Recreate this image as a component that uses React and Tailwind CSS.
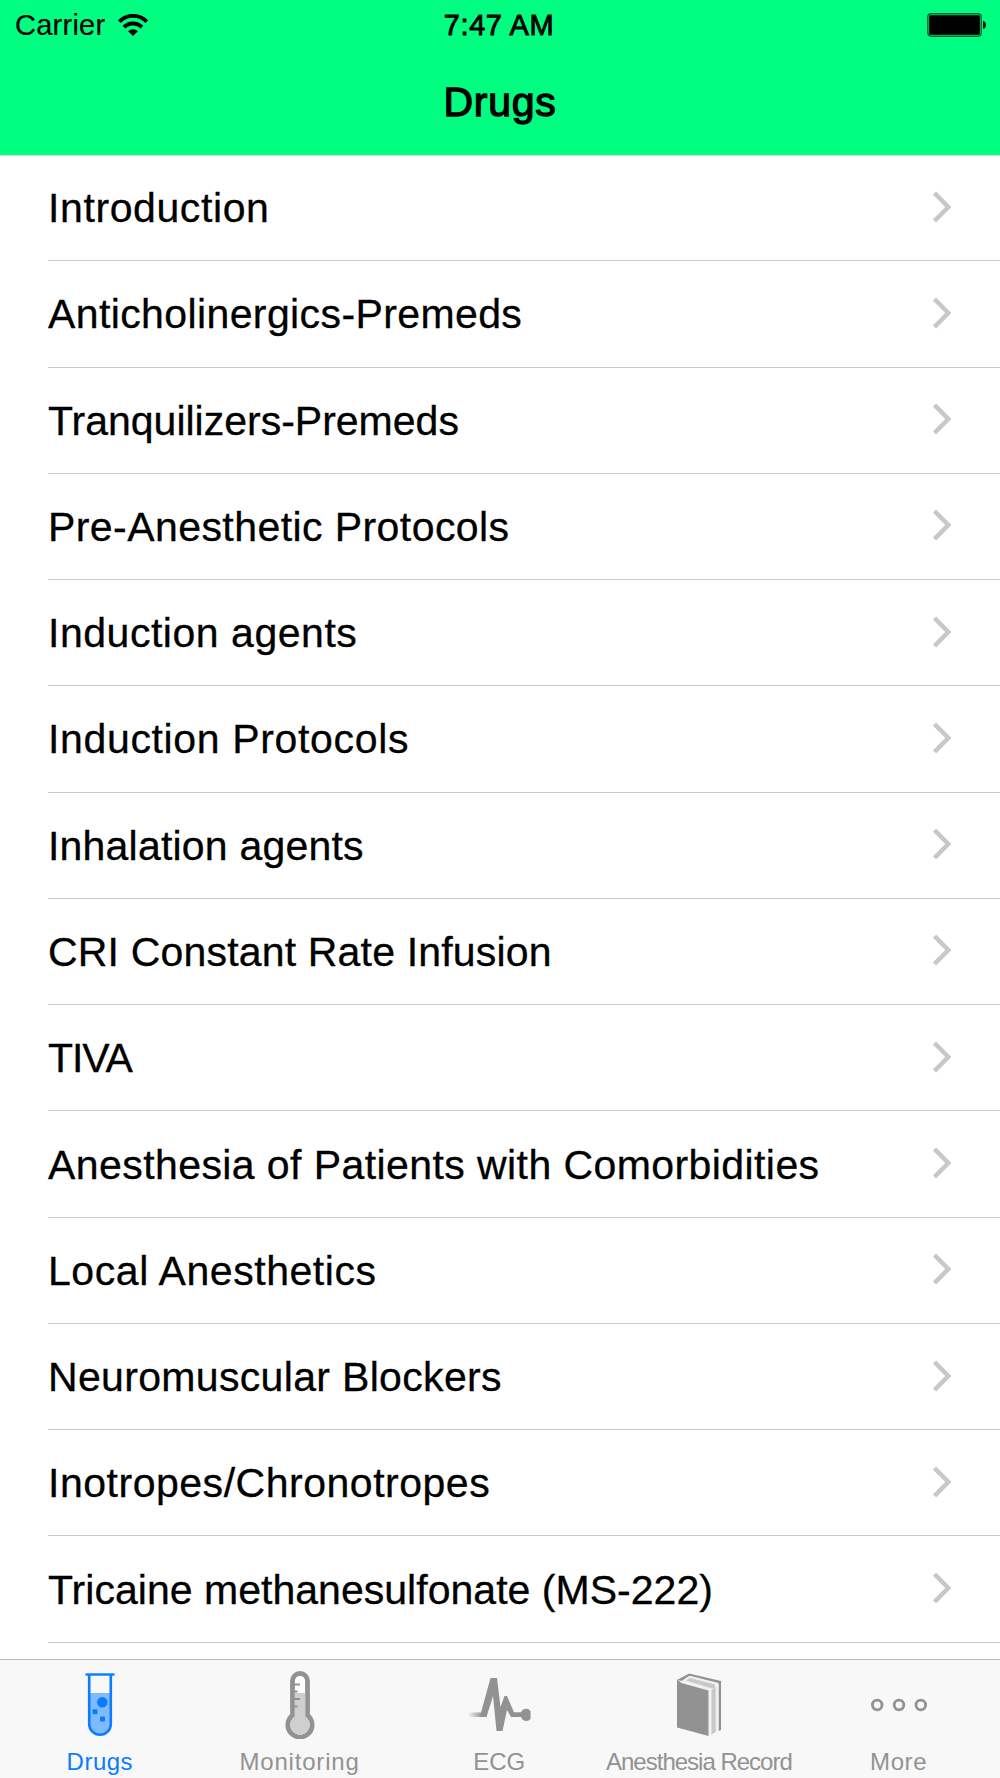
import React from 'react';
import { clsx } from 'clsx';

const topics = [
    { label: 'Introduction', tracking: 'tracking-[0.6px]' },
    { label: 'Anticholinergics-Premeds', tracking: 'tracking-[0.39px]' },
    { label: 'Tranquilizers-Premeds', tracking: 'tracking-[0px]' },
    { label: 'Pre-Anesthetic Protocols', tracking: 'tracking-[0.43px]' },
    { label: 'Induction agents', tracking: 'tracking-[0.53px]' },
    { label: 'Induction Protocols', tracking: 'tracking-[0.65px]' },
    { label: 'Inhalation agents', tracking: 'tracking-[0.2px]' },
    { label: 'CRI Constant Rate Infusion', tracking: 'tracking-[0.18px]' },
    { label: 'TIVA', tracking: 'tracking-[-1.1px]' },
    { label: 'Anesthesia of Patients with Comorbidities', tracking: 'tracking-[0.42px]' },
    { label: 'Local Anesthetics', tracking: 'tracking-[0.56px]' },
    { label: 'Neuromuscular Blockers', tracking: 'tracking-[0.33px]' },
    { label: 'Inotropes/Chronotropes', tracking: 'tracking-[0.52px]' },
    { label: 'Tricaine methanesulfonate (MS-222)', tracking: 'tracking-[0.03px]' },
];

function WifiIcon() {
    return (
        <svg className="-mt-px -ml-px" width="30" height="22" viewBox="0 0 30 22" fill="none" stroke="#000" strokeWidth="3.8">
            <path d="M1.3 7.7A18.8 18.8 0 0 1 28.7 7.7" />
            <path d="M6 13.2A12.8 12.8 0 0 1 24 13.2" />
            <path d="M10.1 17.3A7 7 0 0 1 19.9 17.3L15 22Z" fill="#000" stroke="none" />
        </svg>
    );
}

function BatteryIcon() {
    return (
        <svg width="60" height="24" viewBox="0 0 60 24">
            <rect x="0.7" y="0.7" width="53.6" height="22.6" rx="3.5" fill="#00c464" stroke="#00622f" strokeWidth="1.2" />
            <rect x="2.2" y="2.2" width="50.6" height="19.6" rx="1.5" fill="#000" />
            <path d="M56 8C60 8.6 60 15.4 56 16Z" fill="#000" />
        </svg>
    );
}

function Chevron() {
    return (
        <svg className="-mt-0.5" width="20" height="32" viewBox="0 0 20 32" fill="none" stroke="#c7c7cc" strokeWidth="4.5">
            <path d="M1.5 2L15.3 16L1.5 30" />
        </svg>
    );
}

function TubeIcon() {
    return (
        <svg width="30" height="64" viewBox="0 0 30 64">
            <path d="M4 20H26V51A11 11 0 0 1 4 51Z" fill="#7fbafc" />
            <path d="M4.2 2V51A10.8 10.8 0 0 0 25.8 51V2" fill="none" stroke="#0a7cff" strokeWidth="2.6" />
            <path d="M0.5 1.5H29.5" stroke="#0a7cff" strokeWidth="2.4" />
            <circle cx="17.3" cy="29.3" r="5.2" fill="#0a7cff" />
            <rect x="7.5" y="36.3" width="5" height="5" rx="1" fill="#0a7cff" />
            <rect x="15" y="43.5" width="5" height="5" rx="1" fill="#0a7cff" />
        </svg>
    );
}

function ThermometerIcon() {
    return (
        <svg width="30" height="68" viewBox="0 0 30 68">
            <path
                d="M7.5 10A7.5 7.6 0 0 1 22.5 10V44.5A12.1 12.1 0 1 1 7.5 44.5Z"
                fill="#fff"
                stroke="#929292"
                strokeWidth="4.8"
            />
            <path d="M9.7 22H20.3V45.5A9.9 9.9 0 1 1 9.7 45.5Z" fill="#cfcfcf" />
            <path d="M8 13.5H15M8 20.5H12.5M8 28H15M8 35.5H12.5" stroke="#929292" strokeWidth="2.2" />
        </svg>
    );
}

function EcgIcon() {
    return (
        <svg className="ml-0.5" width="64" height="54" viewBox="0 0 64 54">
            <defs>
                <linearGradient id="ecg-fade" x1="0" x2="1">
                    <stop offset="0" stopColor="#929292" stopOpacity="0" />
                    <stop offset="1" stopColor="#929292" />
                </linearGradient>
            </defs>
            <rect x="0" y="34.5" width="14" height="4.5" fill="url(#ecg-fade)" />
            <path
                d="M13 34.5L22.5 0H29L32.5 29L36.5 18H39L46 34.2H53A5.5 5.5 0 0 1 62.5 33V41A5.5 5.5 0 0 1 53 39H43L39 32L34.5 53H28.5L25 18L18.5 39H13Z"
                fill="#929292"
            />
        </svg>
    );
}

function BookIcon() {
    return (
        <svg width="44" height="64" viewBox="0 0 44 64">
            <path d="M0 7L12 0.5L44 8V57L41.5 58V11L12 3L5 8Z" fill="#929292" />
            <path d="M4 8.5L13 2.8L41.5 10V57.5L32 63V17.5Z" fill="#f1f1f1" />
            <path d="M9 7.5L13 5L38 11.5V15L35 15.5Z" fill="#c8c8c8" />
            <path d="M34.5 17L38.7 14V59L34.5 61.5Z" fill="#c8c8c8" />
            <path d="M0 6.5L4.5 10L31.5 17.5V63L0 54.5Z" fill="#929292" />
        </svg>
    );
}

function MoreIcon() {
    return (
        <svg width="58" height="14" viewBox="0 0 58 14" fill="none" stroke="#929292" strokeWidth="2.8">
            <circle cx="7.2" cy="7" r="4.8" />
            <circle cx="29" cy="7" r="4.8" />
            <circle cx="50.8" cy="7" r="4.8" />
        </svg>
    );
}

const tabs = [
    { label: 'Drugs', icon: <TubeIcon />, active: true, tracking: 'tracking-[0.5px]' },
    { label: 'Monitoring', icon: <ThermometerIcon />, tracking: 'tracking-[0.8px]' },
    { label: 'ECG', icon: <EcgIcon />, tracking: 'tracking-[0px]' },
    { label: 'Anesthesia Record', icon: <BookIcon />, tracking: 'tracking-[-1px]' },
    { label: 'More', icon: <MoreIcon />, tracking: 'tracking-[0.6px]' },
];

function StatusBar() {
    return (
        <div className="grid h-[50px] grid-cols-3 items-center text-[29px] leading-none">
            <div className="flex items-center gap-3.5 pl-[15px]">
                <span className="pt-px tracking-[0.25px] [-webkit-text-stroke:0.2px_#000]">Carrier</span>
                <WifiIcon />
            </div>
            <div className="pt-px pr-0.5 text-center tracking-[0.55px] [-webkit-text-stroke:0.9px_#000]">7:47 AM</div>
            <div className="flex justify-end pr-[13px]">
                <BatteryIcon />
            </div>
        </div>
    );
}

function TopicRow({ label, tracking }) {
    return (
        <li className="h-[106.28px] pl-[48px]">
            <div className="flex h-full items-center justify-between border-b border-[#c8c7cc] pr-[47px]">
                <span
                    className={clsx(
                        'pt-0.5 text-[41px] leading-none whitespace-nowrap [-webkit-text-stroke:0.3px_#000]',
                        tracking
                    )}
                >
                    {label}
                </span>
                <Chevron />
            </div>
        </li>
    );
}

function TabItem({ label, icon, active, tracking }) {
    return (
        <div className={clsx('flex w-[199.7px] flex-col items-center', active ? 'text-[#0a7cff]' : 'text-[#929292]')}>
            <div className="flex h-[89px] items-center justify-center pt-px">{icon}</div>
            <span className={clsx('text-[24px] leading-[26px] whitespace-nowrap', tracking)}>{label}</span>
        </div>
    );
}

export default function App() {
    return (
        <div className="flex h-[1778px] w-[1000px] flex-col overflow-hidden bg-white font-['Liberation_Sans',Arial,sans-serif] text-black">
            <header className="h-[155px] shrink-0 bg-[#00ff80] shadow-[0_1px_0_#dcdce0]">
                <StatusBar />
                <h1 className="pt-8 text-center text-[41px] leading-none tracking-[0.7px] [-webkit-text-stroke:1.3px_#000]">
                    Drugs
                </h1>
            </header>
            <ul className="min-h-0 flex-1 overflow-hidden">
                {topics.map((topic) => (
                    <TopicRow key={topic.label} {...topic} />
                ))}
            </ul>
            <nav className="flex h-[119px] shrink-0 border-t border-[#b9b9b9] bg-[#f8f8f8]">
                {tabs.map((tab) => (
                    <TabItem key={tab.label} {...tab} />
                ))}
            </nav>
        </div>
    );
}
